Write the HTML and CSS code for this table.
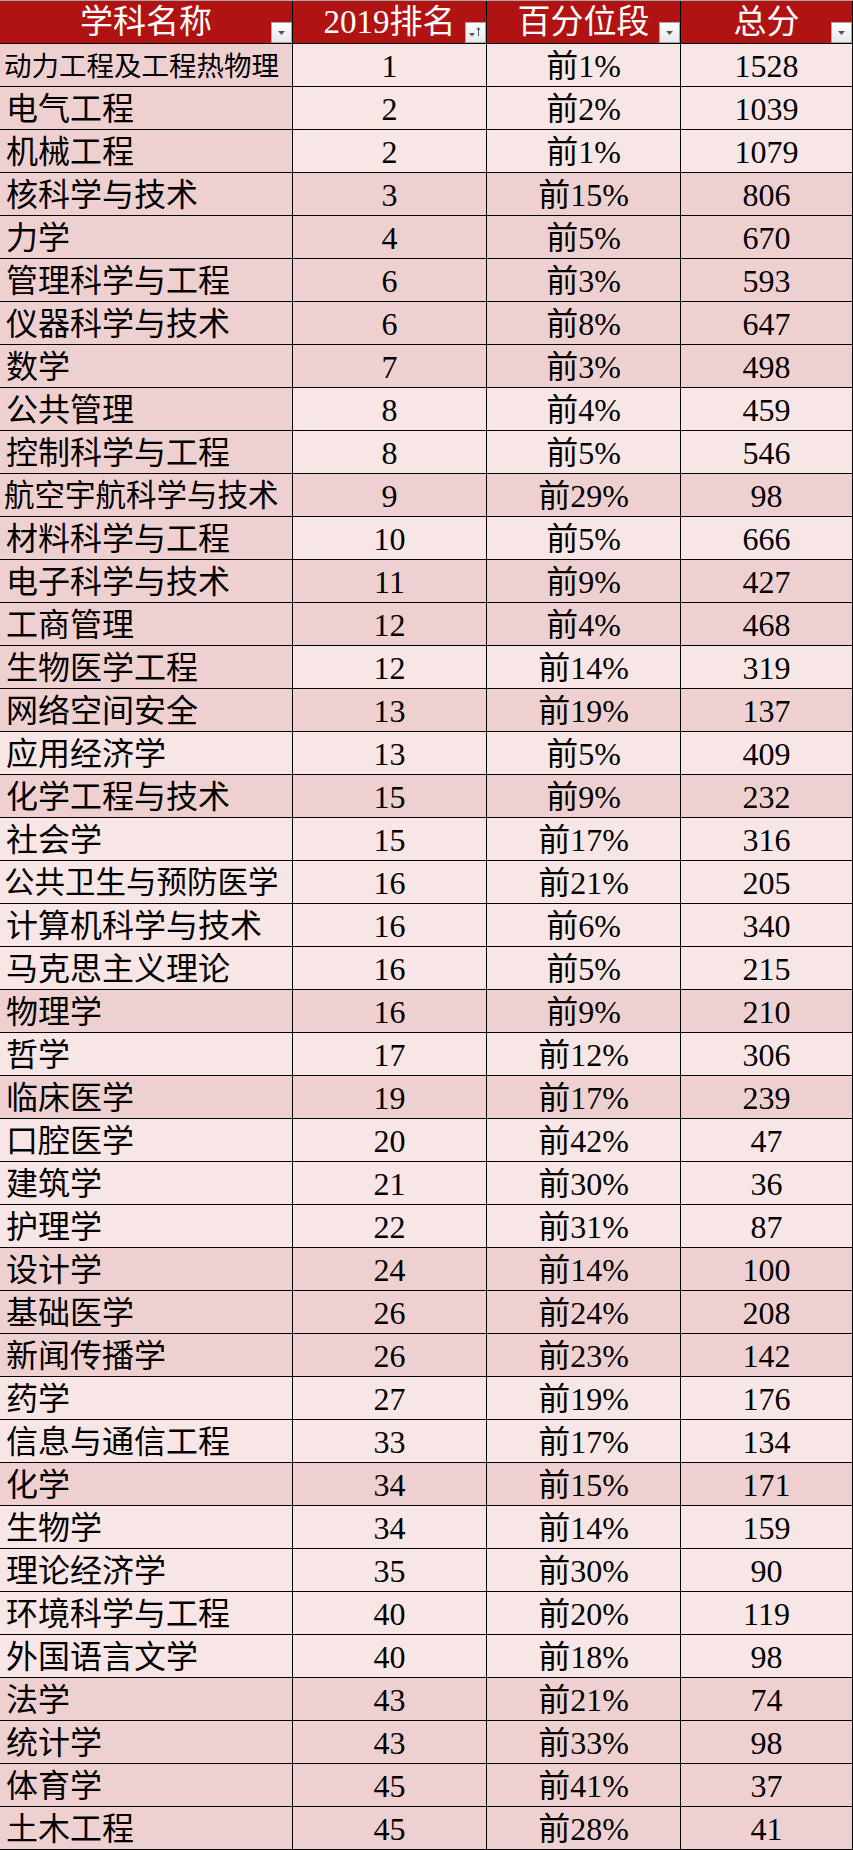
FILE: index.html
```html
<!DOCTYPE html>
<html lang="zh-CN">
<head>
<meta charset="utf-8">
<title>学科排名</title>
<link rel="stylesheet" href="styles.css">
</head>
<body>
<div class="sheet">
  <div class="row head">
    <div class="cell">学科名称<span class="filter"><svg viewBox="0 0 19 19" width="19" height="19"><path d="M6 8h7l-3.5 4z" fill="#555"/></svg></span></div>
    <div class="cell">2019排名<span class="filter"><svg viewBox="0 0 19 19" width="19" height="19"><path d="M3 10h6l-3 3.5z" fill="#555"/><path d="M12.5 13V5M11 7l1.5-2.5L14 7" stroke="#555" stroke-width="1" fill="none"/></svg></span></div>
    <div class="cell">百分位段<span class="filter"><svg viewBox="0 0 19 19" width="19" height="19"><path d="M6 8h7l-3.5 4z" fill="#555"/></svg></span></div>
    <div class="cell">总分<span class="filter"><svg viewBox="0 0 19 19" width="19" height="19"><path d="M6 8h7l-3.5 4z" fill="#555"/></svg></span></div>
  </div>
  <div class="row light"><div class="cell name hl longest">动力工程及工程热物理</div><div class="cell">1</div><div class="cell">前1%</div><div class="cell">1528</div></div>
  <div class="row light"><div class="cell name hl">电气工程</div><div class="cell">2</div><div class="cell">前2%</div><div class="cell">1039</div></div>
  <div class="row light"><div class="cell name hl">机械工程</div><div class="cell">2</div><div class="cell">前1%</div><div class="cell">1079</div></div>
  <div class="row dark"><div class="cell name">核科学与技术</div><div class="cell">3</div><div class="cell">前15%</div><div class="cell">806</div></div>
  <div class="row dark"><div class="cell name">力学</div><div class="cell">4</div><div class="cell">前5%</div><div class="cell">670</div></div>
  <div class="row dark"><div class="cell name">管理科学与工程</div><div class="cell">6</div><div class="cell">前3%</div><div class="cell">593</div></div>
  <div class="row dark"><div class="cell name">仪器科学与技术</div><div class="cell">6</div><div class="cell">前8%</div><div class="cell">647</div></div>
  <div class="row dark"><div class="cell name">数学</div><div class="cell">7</div><div class="cell">前3%</div><div class="cell">498</div></div>
  <div class="row light"><div class="cell name hl">公共管理</div><div class="cell">8</div><div class="cell">前4%</div><div class="cell">459</div></div>
  <div class="row light"><div class="cell name hl">控制科学与工程</div><div class="cell">8</div><div class="cell">前5%</div><div class="cell">546</div></div>
  <div class="row dark"><div class="cell name long">航空宇航科学与技术</div><div class="cell">9</div><div class="cell">前29%</div><div class="cell">98</div></div>
  <div class="row light"><div class="cell name hl">材料科学与工程</div><div class="cell">10</div><div class="cell">前5%</div><div class="cell">666</div></div>
  <div class="row dark"><div class="cell name">电子科学与技术</div><div class="cell">11</div><div class="cell">前9%</div><div class="cell">427</div></div>
  <div class="row dark"><div class="cell name">工商管理</div><div class="cell">12</div><div class="cell">前4%</div><div class="cell">468</div></div>
  <div class="row light"><div class="cell name hl">生物医学工程</div><div class="cell">12</div><div class="cell">前14%</div><div class="cell">319</div></div>
  <div class="row dark"><div class="cell name">网络空间安全</div><div class="cell">13</div><div class="cell">前19%</div><div class="cell">137</div></div>
  <div class="row light"><div class="cell name">应用经济学</div><div class="cell">13</div><div class="cell">前5%</div><div class="cell">409</div></div>
  <div class="row dark"><div class="cell name">化学工程与技术</div><div class="cell">15</div><div class="cell">前9%</div><div class="cell">232</div></div>
  <div class="row light"><div class="cell name">社会学</div><div class="cell">15</div><div class="cell">前17%</div><div class="cell">316</div></div>
  <div class="row light"><div class="cell name long">公共卫生与预防医学</div><div class="cell">16</div><div class="cell">前21%</div><div class="cell">205</div></div>
  <div class="row light"><div class="cell name">计算机科学与技术</div><div class="cell">16</div><div class="cell">前6%</div><div class="cell">340</div></div>
  <div class="row light"><div class="cell name">马克思主义理论</div><div class="cell">16</div><div class="cell">前5%</div><div class="cell">215</div></div>
  <div class="row dark"><div class="cell name">物理学</div><div class="cell">16</div><div class="cell">前9%</div><div class="cell">210</div></div>
  <div class="row light"><div class="cell name">哲学</div><div class="cell">17</div><div class="cell">前12%</div><div class="cell">306</div></div>
  <div class="row dark"><div class="cell name">临床医学</div><div class="cell">19</div><div class="cell">前17%</div><div class="cell">239</div></div>
  <div class="row light"><div class="cell name">口腔医学</div><div class="cell">20</div><div class="cell">前42%</div><div class="cell">47</div></div>
  <div class="row light"><div class="cell name">建筑学</div><div class="cell">21</div><div class="cell">前30%</div><div class="cell">36</div></div>
  <div class="row light"><div class="cell name">护理学</div><div class="cell">22</div><div class="cell">前31%</div><div class="cell">87</div></div>
  <div class="row dark"><div class="cell name">设计学</div><div class="cell">24</div><div class="cell">前14%</div><div class="cell">100</div></div>
  <div class="row dark"><div class="cell name">基础医学</div><div class="cell">26</div><div class="cell">前24%</div><div class="cell">208</div></div>
  <div class="row dark"><div class="cell name">新闻传播学</div><div class="cell">26</div><div class="cell">前23%</div><div class="cell">142</div></div>
  <div class="row light"><div class="cell name">药学</div><div class="cell">27</div><div class="cell">前19%</div><div class="cell">176</div></div>
  <div class="row light"><div class="cell name">信息与通信工程</div><div class="cell">33</div><div class="cell">前17%</div><div class="cell">134</div></div>
  <div class="row dark"><div class="cell name">化学</div><div class="cell">34</div><div class="cell">前15%</div><div class="cell">171</div></div>
  <div class="row light"><div class="cell name">生物学</div><div class="cell">34</div><div class="cell">前14%</div><div class="cell">159</div></div>
  <div class="row light"><div class="cell name">理论经济学</div><div class="cell">35</div><div class="cell">前30%</div><div class="cell">90</div></div>
  <div class="row light"><div class="cell name">环境科学与工程</div><div class="cell">40</div><div class="cell">前20%</div><div class="cell">119</div></div>
  <div class="row light"><div class="cell name">外国语言文学</div><div class="cell">40</div><div class="cell">前18%</div><div class="cell">98</div></div>
  <div class="row dark"><div class="cell name">法学</div><div class="cell">43</div><div class="cell">前21%</div><div class="cell">74</div></div>
  <div class="row dark"><div class="cell name">统计学</div><div class="cell">43</div><div class="cell">前33%</div><div class="cell">98</div></div>
  <div class="row dark"><div class="cell name">体育学</div><div class="cell">45</div><div class="cell">前41%</div><div class="cell">37</div></div>
  <div class="row dark"><div class="cell name">土木工程</div><div class="cell">45</div><div class="cell">前28%</div><div class="cell">41</div></div>
</div>
</body>
</html>
```

FILE: styles.css
```css
html, body {
  margin: 0;
  padding: 0;
  background: #fff;
}

.sheet {
  display: grid;
  grid-template-columns: 292px 193px 193px 171px;
  grid-auto-rows: 42px;
  gap: 1px;
  padding: 0 1px 1px 0;
  background: #000;
  border-top: 1px solid #a8a8a8;
  width: 852px;
  font-family: "Liberation Serif", "Noto Sans CJK SC", serif;
  font-size: 32px;
  color: #000;
}

.row {
  display: contents;
}

.cell {
  position: relative;
  display: flex;
  align-items: center;
  justify-content: center;
  padding-top: 3px;
  line-height: 39px;
  white-space: nowrap;
  overflow: hidden;
}

.cell.name {
  justify-content: flex-start;
  padding-left: 6px;
}

.cell.long {
  font-size: 30.5px;
  padding-left: 4px;
}

.cell.longest {
  font-size: 27.5px;
  padding-left: 4px;
}

.row.light .cell {
  background: #f8e6e6;
}

.row.dark .cell {
  background: #efd0d1;
}

.row.light .cell.hl {
  background: #efd0d1;
}

.row.head .cell {
  background: #b11313;
  color: #fff;
  font-size: 33px;
  padding-top: 0;
  line-height: 42px;
}

.filter {
  position: absolute;
  right: 0;
  bottom: 0;
  width: 19px;
  height: 19px;
  border: 1px solid #a4a8ae;
  background: linear-gradient(#ffffff, #e6e8eb);
  display: flex;
}
```
